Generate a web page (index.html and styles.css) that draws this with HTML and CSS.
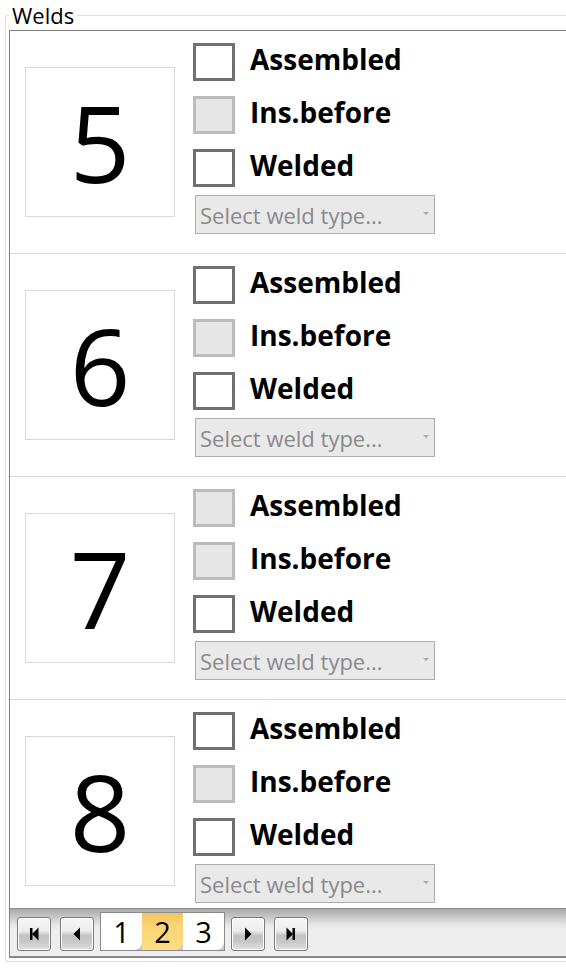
FILE: index.html
```html
<!DOCTYPE html>
<html>
<head>
<meta charset="utf-8">
<link rel="stylesheet" href="styles.css">
</head>
<body>
<fieldset class="group">
  <legend>Welds</legend>
  <div class="panel">
    <div class="list">
      <div class="row">
        <div class="num">5</div>
        <div class="fields">
          <div class="check"><span class="box"></span><span class="label">Assembled</span></div>
          <div class="check"><span class="box disabled"></span><span class="label">Ins.before</span></div>
          <div class="check last"><span class="box"></span><span class="label">Welded</span></div>
          <div class="select"><span>Select weld type...</span><span class="arrow"></span></div>
        </div>
      </div>
      <div class="row">
        <div class="num">6</div>
        <div class="fields">
          <div class="check"><span class="box"></span><span class="label">Assembled</span></div>
          <div class="check"><span class="box disabled"></span><span class="label">Ins.before</span></div>
          <div class="check last"><span class="box"></span><span class="label">Welded</span></div>
          <div class="select"><span>Select weld type...</span><span class="arrow"></span></div>
        </div>
      </div>
      <div class="row">
        <div class="num">7</div>
        <div class="fields">
          <div class="check"><span class="box disabled"></span><span class="label">Assembled</span></div>
          <div class="check"><span class="box disabled"></span><span class="label">Ins.before</span></div>
          <div class="check last"><span class="box"></span><span class="label">Welded</span></div>
          <div class="select"><span>Select weld type...</span><span class="arrow"></span></div>
        </div>
      </div>
      <div class="row">
        <div class="num">8</div>
        <div class="fields">
          <div class="check"><span class="box"></span><span class="label">Assembled</span></div>
          <div class="check"><span class="box disabled"></span><span class="label">Ins.before</span></div>
          <div class="check last"><span class="box"></span><span class="label">Welded</span></div>
          <div class="select"><span>Select weld type...</span><span class="arrow"></span></div>
        </div>
      </div>
    </div>
    <div class="pager">
      <div class="pbtn">
        <svg width="14" height="14" viewBox="0 0 14 14"><rect x="3" y="1" width="2.5" height="12" fill="#000"/><polygon points="11.5,0.5 5,7 11.5,13.5" fill="#000"/></svg>
      </div>
      <div class="pbtn">
        <svg width="14" height="14" viewBox="0 0 14 14"><polygon points="10,0.5 3.5,7 10,13.5" fill="#000"/></svg>
      </div>
      <div class="pages">
        <div class="page">1</div>
        <div class="page current">2</div>
        <div class="page">3</div>
      </div>
      <div class="pbtn">
        <svg width="14" height="14" viewBox="0 0 14 14"><polygon points="4,0.5 10.5,7 4,13.5" fill="#000"/></svg>
      </div>
      <div class="pbtn">
        <svg width="14" height="14" viewBox="0 0 14 14"><polygon points="2.5,0.5 9,7 2.5,13.5" fill="#000"/><rect x="8.5" y="1" width="2.5" height="12" fill="#000"/></svg>
      </div>
    </div>
  </div>
</fieldset>
</body>
</html>
```
FILE: styles.css
```css
html, body {
  margin: 0;
  padding: 0;
  background: #fff;
  overflow: hidden;
}
body {
  font-family: "Open Sans", "Noto Sans", sans-serif;
  color: #000;
  width: 566px;
  height: 969px;
}
.group {
  margin: 0 0 0 5px;
  padding: 0 0 3px 3px;
  border: 1px solid #d5dfe5;
  border-right: none;
  border-radius: 3px 0 0 3px;
  width: 561px;
  min-width: 0;
  box-sizing: border-box;
}
.group legend {
  padding: 0 3px;
  margin: 0;
  font-size: 22px;
  line-height: 31px;
  height: 31px;
}
.panel {
  margin-top: -1px;
  border: 1px solid #828282;
  border-right: none;
}
.list {
  height: 877px;
  overflow: hidden;
}
.row {
  height: 222px;
  border-bottom: 1px solid #d9d9d9;
  display: flex;
  align-items: flex-start;
  padding-left: 15px;
}
.num {
  width: 148px;
  height: 148px;
  margin-top: 36px;
  border: 1px solid #d9d9d9;
  display: flex;
  align-items: center;
  justify-content: center;
  font-size: 106px;
  line-height: 1;
}
.fields {
  margin-left: 18px;
  padding-top: 12px;
  display: flex;
  flex-direction: column;
}
.check {
  display: flex;
  align-items: center;
  height: 38px;
  margin-bottom: 15px;
}
.check.last {
  margin-bottom: 8px;
}
.box {
  width: 36px;
  height: 32px;
  border: 3px solid #707070;
  background: #fff;
}
.box.disabled {
  border-color: #bcbcbc;
  background: #e6e6e6;
}
.label {
  margin-left: 15px;
  font-weight: 700;
  font-size: 28px;
  line-height: 38px;
  margin-top: -7px;
}
.select {
  margin-left: 2px;
  width: 234px;
  height: 37px;
  padding-left: 4px;
  border: 1px solid #adadad;
  background: #e9e9e9;
  display: flex;
  align-items: center;
  color: #8a8a8a;
  font-size: 22px;
}
.arrow {
  margin-left: auto;
  margin-right: 5px;
  margin-top: -2px;
  width: 0;
  height: 0;
  border-left: 3px solid transparent;
  border-right: 3px solid transparent;
  border-top: 3px solid #a8a8a8;
}
.pager {
  height: 47px;
  border-top: 1px solid #8c8c8c;
  border-bottom: 1px solid #8c8c8c;
  background: linear-gradient(#a9a9a9 0px, #c8c8c8 8px, #e6e6e6 16px, #eeeeee 20px, #eeeeee 100%);
  display: flex;
  align-items: center;
  padding-left: 7px;
}
.pbtn {
  width: 32px;
  height: 32px;
  border: 1px solid #7b7b7b;
  border-radius: 3px;
  box-shadow: inset 0 0 0 1px #fbfbfb;
  background: linear-gradient(#f6f6f6 0%, #ececec 40%, #c2c2c2 55%, #c8c8c8 75%, #e4e4e4 100%);
  display: flex;
  align-items: center;
  justify-content: center;
  margin-right: 9px;
  margin-top: 3px;
}
.pages {
  display: flex;
  height: 37px;
  border: 1px solid #8a8a8a;
  background: linear-gradient(#e2e2e2, #c8c8c8);
  margin-left: -3px;
  margin-right: 6px;
  margin-top: -2px;
}
.page {
  width: 41px;
  height: 37px;
  background: #fff;
  border-bottom-right-radius: 8px;
  display: flex;
  align-items: center;
  justify-content: center;
  font-size: 29px;
  line-height: 1;
}
.page.current {
  background: linear-gradient(#f0c463 0%, #fbd575 35%, #fedd83 100%);
}
```
